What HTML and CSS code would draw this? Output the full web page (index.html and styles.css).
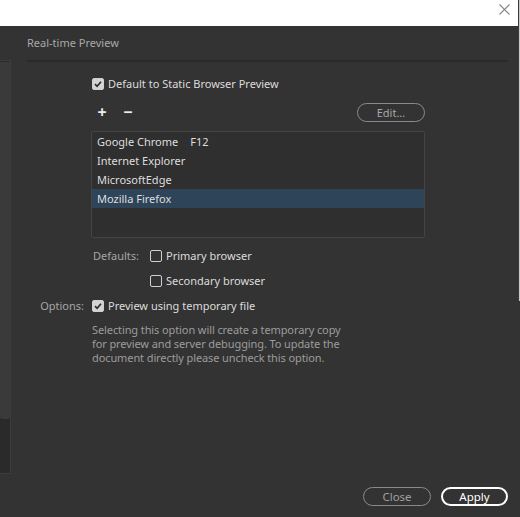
FILE: index.html
```html
<!DOCTYPE html>
<html lang="en">
<head>
<meta charset="utf-8">
<title>Real-time Preview</title>
<link rel="stylesheet" href="styles.css">
</head>
<body>
<div class="window">
  <div class="topbar">
    <svg class="close-x" width="11" height="11" viewBox="0 0 11 11"><path d="M0.5 0.5L10.5 10.5M10.5 0.5L0.5 10.5" stroke="#8a8a8a" stroke-width="1.1" fill="none"/></svg>
  </div>
  <div class="body">
    <div class="sidebar"><div class="thumb"></div></div>
    <div class="main">
      <div class="title">Real-time Preview</div>
      <div class="rule"></div>
      <div class="form">
        <div class="col2">
          <label class="check-row first">
            <span class="cb checked"><svg width="10" height="10" viewBox="0 0 10 10"><path d="M2 5.2L4.1 7.3L8 2.8" stroke="#2b2b2b" stroke-width="1.7" fill="none"/></svg></span>
            <span>Default to Static Browser Preview</span>
          </label>
          <div class="tools">
            <span class="tool">+</span>
            <span class="tool minus">−</span>
            <span class="edit-btn">Edit...</span>
          </div>
          <div class="list">
            <div class="row">Google Chrome<span class="key">F12</span></div>
            <div class="row">Internet Explorer</div>
            <div class="row">MicrosoftEdge</div>
            <div class="row selected">Mozilla Firefox</div>
          </div>
          <div class="defaults">
            <span class="label">Defaults:</span>
            <div class="defaults-opts">
              <label class="check-row"><span class="cb"></span><span>Primary browser</span></label>
              <label class="check-row"><span class="cb"></span><span>Secondary browser</span></label>
            </div>
          </div>
        </div>
        <span class="label opt-label">Options:</span>
        <div class="col2 opt">
          <label class="check-row first">
            <span class="cb checked"><svg width="10" height="10" viewBox="0 0 10 10"><path d="M2 5.2L4.1 7.3L8 2.8" stroke="#2b2b2b" stroke-width="1.7" fill="none"/></svg></span>
            <span>Preview using temporary file</span>
          </label>
          <p class="desc">Selecting this option will create a temporary copy for preview and server debugging. To update the document directly please uncheck this option.</p>
        </div>
      </div>
      <div class="footer">
        <span class="btn close">Close</span>
        <span class="btn apply">Apply</span>
      </div>
    </div>
  </div>
  <div class="edge"></div>
</div>
</body>
</html>
```
FILE: styles.css
```css
html, body {
  margin: 0;
  padding: 0;
  background: #333333;
}
body {
  font-family: "Noto Sans", "Open Sans", sans-serif;
  font-size: 11px;
  color: #dcdcdc;
}
.window {
  position: relative;
  width: 520px;
  height: 517px;
  overflow: hidden;
}
.topbar {
  height: 26px;
  background: #ffffff;
  margin-right: 2px;
  display: flex;
  justify-content: flex-end;
  align-items: flex-start;
}
.close-x {
  margin-top: 4px;
  margin-right: 8px;
}
.edge {
  position: absolute;
  top: 0;
  right: 0;
  width: 2px;
  height: 301px;
  background: linear-gradient(to right, #3a3a3a 0 1px, #c8c8c8 1px);
}
.body {
  display: flex;
  height: 491px;
}
.sidebar {
  width: 10px;
  margin-top: 34px;
  height: 411px;
  background: #2a2a2a;
  border: 1px solid #3d3d3d;
  border-left: none;
  padding-top: 1px;
  box-sizing: content-box;
}
.thumb {
  height: 357px;
  width: 10px;
  background: #3a3a3a;
  border-radius: 0 0 2px 2px;
}
.main {
  flex: 1;
  display: flex;
  flex-direction: column;
  padding-left: 16px;
  padding-right: 12px;
}
.title {
  color: #a9a9a9;
  margin-top: 9px;
  height: 15px;
  line-height: 15px;
}
.rule {
  margin-top: 10px;
  height: 2px;
  background: #2a2a2a;
}
.form {
  display: grid;
  grid-template-columns: 57px 1fr;
  column-gap: 7px;
  margin-top: 15px;
}
.col2 {
  grid-column: 2;
  width: 334px;
}
.check-row {
  display: flex;
  align-items: center;
  height: 14px;
  gap: 4px;
  line-height: 14px;
  white-space: nowrap;
}
.check-row.first {
  margin-left: 1px;
}
.cb {
  width: 12px;
  height: 12px;
  box-sizing: border-box;
  border: 1px solid #d0d0d0;
  border-radius: 2px;
  display: flex;
  align-items: center;
  justify-content: center;
  flex: none;
}
.cb.checked {
  background: #d4d4d4;
}
.tools {
  display: flex;
  align-items: center;
  margin-top: 11px;
  height: 20px;
}
.tool {
  color: #ededed;
  font-size: 16px;
  font-weight: bold;
  line-height: 20px;
  margin-left: 4px;
  width: 14px;
  text-align: center;
}
.tool.minus {
  margin-left: 12px;
}
.edit-btn {
  margin-left: auto;
  width: 66px;
  height: 17px;
  border: 1px solid #8a8a8a;
  border-radius: 10px;
  color: #a8a8a8;
  text-align: center;
  line-height: 17px;
}
.list {
  margin-top: 9px;
  height: 105px;
  border: 1px solid #444444;
  border-radius: 2px;
  background: #2f2f2f;
}
.row {
  height: 19px;
  line-height: 19px;
  padding-left: 5px;
  color: #dedede;
}
.row.selected {
  background: #2e4459;
}
.key {
  margin-left: 12px;
}
.defaults {
  display: flex;
  margin-top: 11px;
}
.label {
  color: #a6a6a6;
  line-height: 14px;
  text-align: right;
}
.defaults .label {
  width: 48px;
  margin-right: 11px;
}
.defaults-opts {
  display: flex;
  flex-direction: column;
  gap: 11px;
}
.opt-label {
  grid-column: 1;
  margin-top: 11px;
}
.opt {
  margin-top: 11px;
}
.desc {
  margin: 10px 0 0 1px;
  color: #9c9c9c;
  line-height: 14px;
  width: 256px;
  letter-spacing: -0.1px;
}
.footer {
  margin-top: auto;
  margin-bottom: 11px;
  display: flex;
  justify-content: flex-end;
  gap: 10px;
}
.btn {
  height: 17px;
  line-height: 17px;
  text-align: center;
  border-radius: 10px;
  font-size: 11.5px;
}
.btn.close {
  width: 66px;
  border: 1px solid #8a8a8a;
  color: #a0a0a0;
}
.btn.apply {
  width: 63px;
  height: 15px;
  line-height: 15px;
  border: 2px solid #ffffff;
  color: #ffffff;
}
```
